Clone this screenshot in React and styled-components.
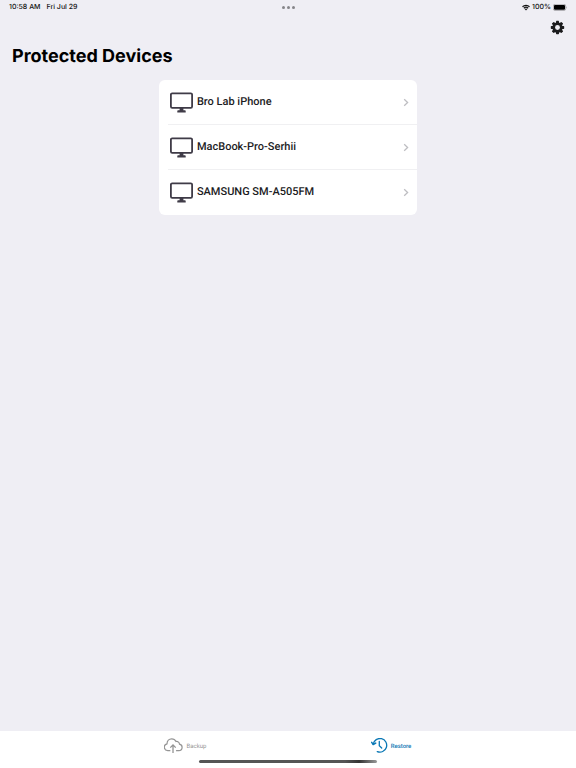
import React from "react";
import styled, { createGlobalStyle } from "styled-components";

const GlobalStyle = createGlobalStyle`
  * { box-sizing: border-box; }
  body { margin: 0; background: #efeef4; text-rendering: geometricPrecision; }
  button { font: inherit; color: inherit; background: none; border: 0; padding: 0; cursor: pointer; text-rendering: inherit; }
`;

const Screen = styled.div`
  min-height: 100vh;
  display: flex;
  flex-direction: column;
  background: #efeef4;
  color: #000;
  font-family: Inter, "Liberation Sans", sans-serif;
`;

const StatusBar = styled.header`
  display: grid;
  grid-template-columns: 1fr auto 1fr;
  align-items: center;
  height: 14px;
  padding: 0 9px;
  font-size: 7px;
  line-height: 14px;
  font-weight: 500;
  color: #111;
`;

const Clock = styled.div`
  display: flex;
  gap: 6px;
`;

const Multitask = styled.div`
  display: flex;
  gap: 2px;
`;

const Dot = styled.span`
  width: 3px;
  height: 3px;
  border-radius: 50%;
  background: #858589;
`;

const Power = styled.div`
  display: flex;
  justify-content: flex-end;
  align-items: center;
  gap: 2px;
`;

const Toolbar = styled.div`
  display: flex;
  justify-content: flex-end;
  align-items: center;
  height: 27px;
  padding: 0 11px;
`;

const IconButton = styled.button`
  display: flex;
`;

const Title = styled.h1`
  margin: 0;
  padding: 0 12px;
  height: 39px;
  font-size: 18px;
  line-height: 32px;
  font-weight: 700;
`;

const DeviceList = styled.ul`
  list-style: none;
  margin: 0 auto;
  padding: 0;
  width: calc(45% - 1px);
  min-width: 220px;
  border-radius: 6px;
  background: #fff;
  overflow: hidden;
`;

const DeviceItem = styled.li`
  padding-left: 9px;
`;

const DeviceButton = styled.button`
  display: flex;
  align-items: center;
  width: 100%;
  height: 45px;
  padding-left: 2px;
  padding-right: 8px;
  text-align: left;
  border-bottom: 1px solid ${(p) => (p.$last ? "transparent" : "#f0f0f2")};
`;

const DeviceName = styled.span`
  flex: 1;
  padding: 0 4px;
  font-family: Roboto, "Liberation Sans", sans-serif;
  font-size: 11px;
  line-height: 16px;
  font-weight: 500;
  color: #1c1c1e;
`;

const Footer = styled.footer`
  margin-top: auto;
  background: #fff;
`;

const TabBar = styled.nav`
  display: grid;
  grid-template-columns: 1fr 1fr;
  height: 29px;
  padding: 0 82px;
`;

const Tab = styled.button`
  display: flex;
  justify-content: center;
  align-items: center;
  gap: 3px;
  font-family: Roboto, "Liberation Sans", sans-serif;
  font-size: 6px;
  line-height: 12px;
  color: ${(p) => (p.$active ? "#0b78b5" : "#949494")};
`;

const TabLabel = styled.span`
  padding-top: 2px;
  font-weight: ${(p) => (p.$active ? 500 : 400)};
`;

const HomeIndicator = styled.div`
  width: 31%;
  height: 3px;
  margin: 0 auto 5px;
  border-radius: 2px;
  background: linear-gradient(90deg, #555 0%, #555 82%, #333 90%, #999 100%);
`;

const WifiIcon = () => (
  <svg width="8" height="7" viewBox="0 0 16 14" aria-label="Wi-Fi">
    <path d="M1 5.6a10 10 0 0 1 14 0M3.7 8.5a6.1 6.1 0 0 1 8.6 0" fill="none" stroke="#111" strokeWidth="2.4" />
    <path d="M5.3 10.2a3.8 3.8 0 0 1 5.4 0L8 13z" fill="#111" />
  </svg>
);

const BatteryIcon = () => (
  <svg width="14" height="7" viewBox="0 0 14 7" aria-label="Battery full">
    <rect x=".3" y=".3" width="12.4" height="6.2" rx="1.7" fill="none" stroke="#88888c" strokeWidth=".6" />
    <rect x="1" y="1" width="11" height="4.8" rx="1" fill="#000" />
    <path d="M13.3 2.4c.7.3.7 1.7 0 2z" fill="#88888c" />
  </svg>
);

const GearIcon = () => (
  <svg width="15" height="15" viewBox="0 0 30 30" aria-hidden="true">
    <g fill="#1b1b1d">
      {[0, 45, 90, 135].map((angle) => (
        <rect key={angle} x="12" y="1.6" width="6" height="26.8" rx="1.3" transform={`rotate(${angle} 15 15)`} />
      ))}
      <circle cx="15" cy="15" r="10.3" />
    </g>
    <circle cx="15" cy="15" r="4.9" fill="#efeef4" />
  </svg>
);

const MonitorIcon = () => (
  <svg width="23" height="21" viewBox="0 0 23 21" aria-hidden="true">
    <rect x=".9" y="1.3" width="21.2" height="14.6" rx="1.3" fill="#fff" stroke="#3f3b47" strokeWidth="1.8" />
    <path d="M9.6 16h3.8v2.2h1.5q.8 0 .8.8v1.5H7.3V19q0-.8.8-.8h1.5z" fill="#3f3b47" />
  </svg>
);

const ChevronIcon = () => (
  <svg width="6" height="9" viewBox="0 0 6 9" aria-hidden="true">
    <path d="M1.2 1.2 4.6 4.5 1.2 7.8" fill="none" stroke="#bdbdc1" strokeWidth="1.3" />
  </svg>
);

const CloudUploadIcon = () => (
  <svg width="20" height="16" viewBox="0 0 20 16" fill="none" stroke="currentColor" aria-hidden="true">
    <path d="M5.9 12.7H3.9A3.5 3.5 0 0 1 3 5.8C3.1 3 5 .8 7.7.8c2 0 3.5 1 4.3 2.7 2-.3 3.4 1 3.5 2.7 1.6.4 2.6 1.6 2.6 3.1 0 1.9-1.4 3.4-3.3 3.4h-2.3" strokeWidth="1.2" strokeLinecap="round" />
    <path d="M9 15V7.2M6.3 9.6 9 6.9l2.7 2.7" strokeWidth="1.3" />
  </svg>
);

const HistoryIcon = () => (
  <svg width="17" height="16" viewBox="0 0 17 16" fill="none" stroke="currentColor" aria-hidden="true">
    <path d="M2.2 6.1A6.8 6.8 0 1 1 6.3 13.6" strokeWidth="1.3" strokeLinecap="round" />
    <path d="M.7 4.4 2.2 6.5 4.7 5.1" strokeWidth="1.5" strokeLinecap="round" strokeLinejoin="round" />
    <path d="M8.3 3.4v4.4l2.4 2.2" strokeWidth="1.3" strokeLinecap="round" />
  </svg>
);

const devices = ["Bro Lab iPhone", "MacBook-Pro-Serhii", "SAMSUNG SM-A505FM"];

export default function App() {
  return (
    <Screen>
      <GlobalStyle />
      <StatusBar>
        <Clock>
          <span>10:58 AM</span>
          <span>Fri Jul 29</span>
        </Clock>
        <Multitask>
          <Dot />
          <Dot />
          <Dot />
        </Multitask>
        <Power>
          <WifiIcon />
          <span>100%</span>
          <BatteryIcon />
        </Power>
      </StatusBar>
      <Toolbar>
        <IconButton aria-label="Settings">
          <GearIcon />
        </IconButton>
      </Toolbar>
      <Title>Protected Devices</Title>
      <DeviceList>
        {devices.map((name, index) => (
          <DeviceItem key={name}>
            <DeviceButton $last={index === devices.length - 1}>
              <MonitorIcon />
              <DeviceName>{name}</DeviceName>
              <ChevronIcon />
            </DeviceButton>
          </DeviceItem>
        ))}
      </DeviceList>
      <Footer>
        <TabBar>
          <Tab>
            <CloudUploadIcon />
            <TabLabel>Backup</TabLabel>
          </Tab>
          <Tab $active aria-current="page">
            <HistoryIcon />
            <TabLabel $active>Restore</TabLabel>
          </Tab>
        </TabBar>
        <HomeIndicator />
      </Footer>
    </Screen>
  );
}
